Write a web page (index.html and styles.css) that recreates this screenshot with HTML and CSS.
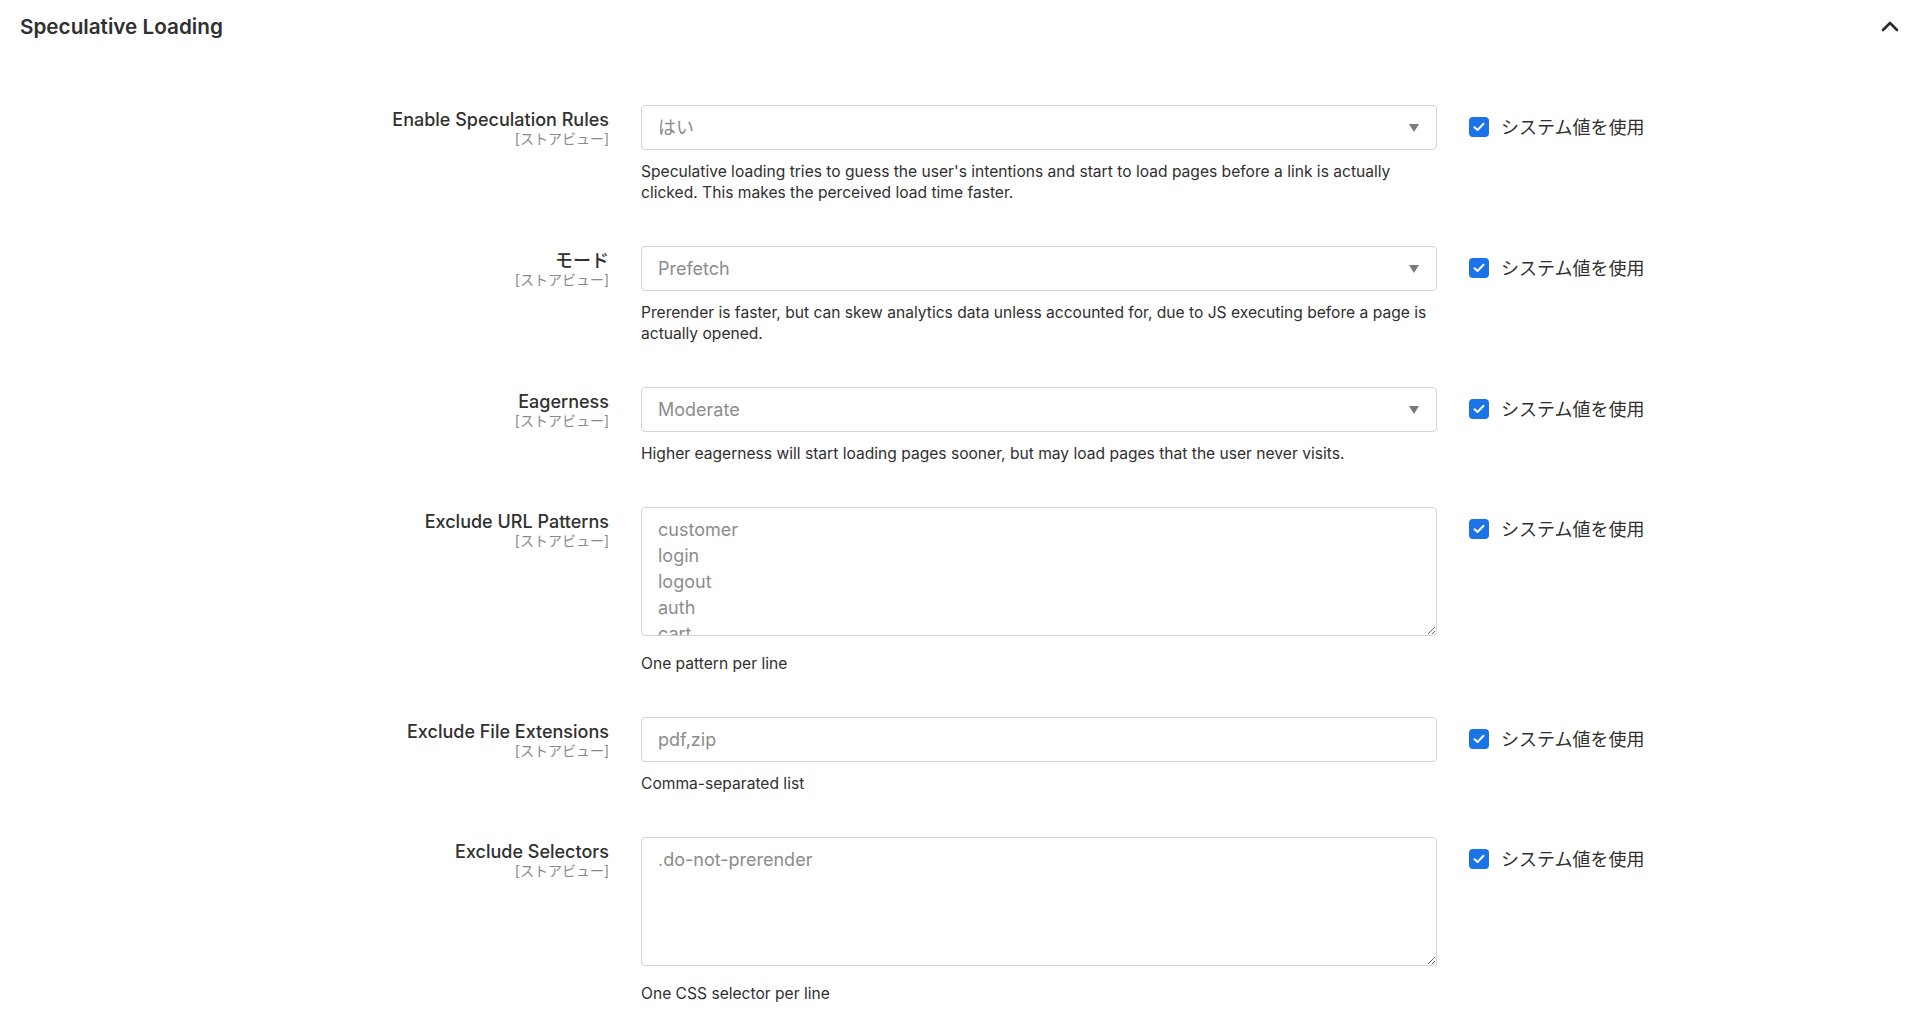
FILE: index.html
```html
<!DOCTYPE html>
<html>
  <head>
    <title>Speculative Loading</title>
    <meta charset="UTF-8">
    <meta name="viewport" content="width=device-width, initial-scale=1.0">
    <link rel="stylesheet" href="styles.css">
  </head>

  <body>

    <div class="section-head">
      <h3>Speculative Loading</h3>
      <svg class="chevron" width="18" height="12" viewBox="0 0 18 12">
        <path d="M2 10 L9 3 L16 10" fill="none" stroke="#2b2b2b" stroke-width="2.6" stroke-linecap="round" stroke-linejoin="round"/>
      </svg>
    </div>

    <form class="config">

      <div class="row">
        <div class="label">
          <span class="name">Enable Speculation Rules</span>
          <span class="scope">[ストアビュー]</span>
        </div>
        <div class="control">
          <div class="select-wrap">
            <select disabled>
              <option>はい</option>
            </select>
            <span class="arrow"></span>
          </div>
          <p class="note">Speculative loading tries to guess the user's intentions and start to load pages before a link is actually clicked. This makes the perceived load time faster.</p>
        </div>
        <label class="inherit"><span class="check"><svg width="12" height="10" viewBox="0 0 12 10"><path d="M1.5 5.2 L4.5 8 L10.5 1.8" fill="none" stroke="#fff" stroke-width="2" stroke-linecap="round" stroke-linejoin="round"/></svg></span>システム値を使用</label>
      </div>

      <div class="row">
        <div class="label">
          <span class="name">モード</span>
          <span class="scope">[ストアビュー]</span>
        </div>
        <div class="control">
          <div class="select-wrap">
            <select disabled>
              <option>Prefetch</option>
            </select>
            <span class="arrow"></span>
          </div>
          <p class="note">Prerender is faster, but can skew analytics data unless accounted for, due to JS executing before a page is actually opened.</p>
        </div>
        <label class="inherit"><span class="check"><svg width="12" height="10" viewBox="0 0 12 10"><path d="M1.5 5.2 L4.5 8 L10.5 1.8" fill="none" stroke="#fff" stroke-width="2" stroke-linecap="round" stroke-linejoin="round"/></svg></span>システム値を使用</label>
      </div>

      <div class="row">
        <div class="label">
          <span class="name">Eagerness</span>
          <span class="scope">[ストアビュー]</span>
        </div>
        <div class="control">
          <div class="select-wrap">
            <select disabled>
              <option>Moderate</option>
            </select>
            <span class="arrow"></span>
          </div>
          <p class="note">Higher eagerness will start loading pages sooner, but may load pages that the user never visits.</p>
        </div>
        <label class="inherit"><span class="check"><svg width="12" height="10" viewBox="0 0 12 10"><path d="M1.5 5.2 L4.5 8 L10.5 1.8" fill="none" stroke="#fff" stroke-width="2" stroke-linecap="round" stroke-linejoin="round"/></svg></span>システム値を使用</label>
      </div>

      <div class="row">
        <div class="label">
          <span class="name">Exclude URL Patterns</span>
          <span class="scope">[ストアビュー]</span>
        </div>
        <div class="control">
          <textarea readonly>customer
login
logout
auth
cart
checkout</textarea>
          <p class="note after-area">One pattern per line</p>
        </div>
        <label class="inherit"><span class="check"><svg width="12" height="10" viewBox="0 0 12 10"><path d="M1.5 5.2 L4.5 8 L10.5 1.8" fill="none" stroke="#fff" stroke-width="2" stroke-linecap="round" stroke-linejoin="round"/></svg></span>システム値を使用</label>
      </div>

      <div class="row">
        <div class="label">
          <span class="name">Exclude File Extensions</span>
          <span class="scope">[ストアビュー]</span>
        </div>
        <div class="control">
          <input type="text" value="pdf,zip" readonly>
          <p class="note">Comma-separated list</p>
        </div>
        <label class="inherit"><span class="check"><svg width="12" height="10" viewBox="0 0 12 10"><path d="M1.5 5.2 L4.5 8 L10.5 1.8" fill="none" stroke="#fff" stroke-width="2" stroke-linecap="round" stroke-linejoin="round"/></svg></span>システム値を使用</label>
      </div>

      <div class="row">
        <div class="label">
          <span class="name">Exclude Selectors</span>
          <span class="scope">[ストアビュー]</span>
        </div>
        <div class="control">
          <textarea readonly>.do-not-prerender</textarea>
          <p class="note after-area">One CSS selector per line</p>
        </div>
        <label class="inherit"><span class="check"><svg width="12" height="10" viewBox="0 0 12 10"><path d="M1.5 5.2 L4.5 8 L10.5 1.8" fill="none" stroke="#fff" stroke-width="2" stroke-linecap="round" stroke-linejoin="round"/></svg></span>システム値を使用</label>
      </div>

    </form>

  </body>
</html>
```

FILE: styles.css
```css
body {
  margin: 0;
  background-color: #fff;
  color: #303030;
  font-family: Inter, "Noto Sans CJK JP", sans-serif;
}

.section-head {
  display: flex;
  align-items: center;
  justify-content: space-between;
  height: 52px;
  padding: 0 21px 0 20px;
}

.section-head h3 {
  margin: 0;
  font-size: 20.7px;
  font-weight: 600;
  color: #303030;
}

.chevron {
  display: block;
}

.config {
  padding: 53px 0 20px 20px;
}

.row {
  display: grid;
  grid-template-columns: 589px 796px auto;
  column-gap: 32px;
  align-items: start;
  margin-bottom: 43px;
}

.label {
  display: flex;
  flex-direction: column;
  align-items: flex-end;
  padding-top: 5px;
  text-align: right;
}

.label .name {
  font-size: 18px;
  font-weight: 500;
  line-height: 20px;
  color: #303030;
}

.label .scope {
  font-size: 14px;
  line-height: 17px;
  color: #8a8a8a;
}

.select-wrap {
  position: relative;
}

select, input[type=text], textarea {
  display: block;
  width: 100%;
  box-sizing: border-box;
  margin: 0;
  border: 1px solid #d4d4d4;
  border-radius: 4px;
  background-color: #fff;
  color: #8c8c8c;
  font-family: Inter, "Noto Sans CJK JP", sans-serif;
  font-size: 18px;
  outline: none;
}

select, input[type=text] {
  height: 45px;
  padding: 0 16px;
}

select {
  appearance: none;
  -webkit-appearance: none;
  opacity: 1;
}

.arrow {
  position: absolute;
  right: 18px;
  top: 19px;
  width: 0;
  height: 0;
  border-left: 5px solid transparent;
  border-right: 5px solid transparent;
  border-top: 8px solid #7a7a7a;
}

textarea {
  height: 129px;
  padding: 9px 16px;
  line-height: 26px;
  resize: vertical;
  overflow: hidden;
}

.note {
  margin: 11px 0 0;
  font-size: 15.6px;
  line-height: 21px;
  color: #303030;
}

.note.after-area {
  margin-top: 17px;
}

.inherit {
  display: flex;
  align-items: center;
  height: 45px;
  padding-bottom: 3px;
  box-sizing: border-box;
  gap: 12px;
  font-size: 18px;
  color: #303030;
  white-space: nowrap;
}

.check {
  display: flex;
  align-items: center;
  justify-content: center;
  width: 20px;
  height: 20px;
  margin-top: 2px;
  border-radius: 4px;
  background-color: #1a73e8;
}
```
